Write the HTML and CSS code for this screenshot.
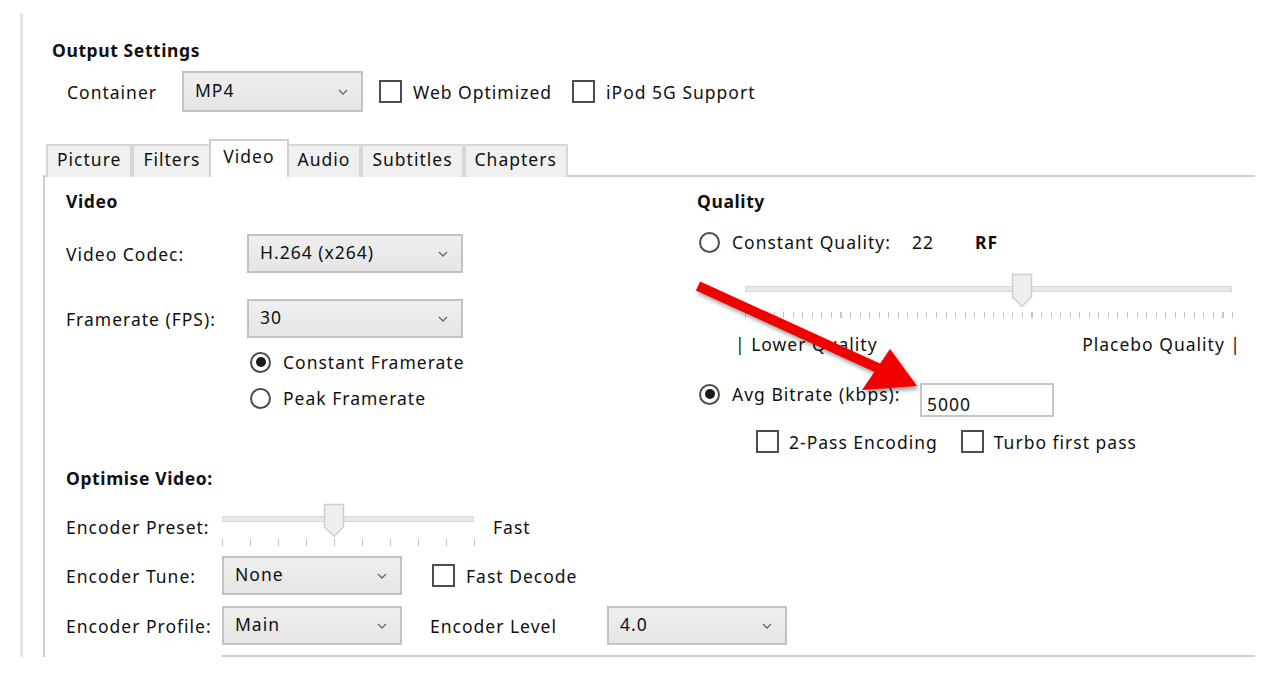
FILE: index.html
```html
<!DOCTYPE html>
<html lang="en">
<head>
  <meta charset="UTF-8">
  <title>Output Settings</title>
  <link rel="stylesheet" href="styles.css">
</head>
<body>
  <div class="window">
    <h2 class="section-title">Output Settings</h2>

    <div class="container-row">
      <span class="container-label">Container</span>
      <div class="select select-mp4">
        <span>MP4</span>
        <svg class="chevron" width="10" height="6" viewBox="0 0 10 6"><path d="M1 1 L5 5 L9 1" fill="none" stroke="#6b6b6b" stroke-width="1.4"/></svg>
      </div>
      <label class="check"><span class="box"></span>Web Optimized</label>
      <label class="check"><span class="box"></span>iPod 5G Support</label>
    </div>

    <div class="tabs">
      <div class="tab">Picture</div>
      <div class="tab">Filters</div>
      <div class="tab active">Video</div>
      <div class="tab">Audio</div>
      <div class="tab">Subtitles</div>
      <div class="tab">Chapters</div>
    </div>

    <div class="panel">
      <div class="columns">
        <!-- video -->
        <div class="col">
          <div class="group-title">Video</div>
          <div class="form-row codec-row">
            <span class="row-label">Video Codec:</span>
            <div class="select select-wide">
              <span>H.264 (x264)</span>
              <svg class="chevron" width="10" height="6" viewBox="0 0 10 6"><path d="M1 1 L5 5 L9 1" fill="none" stroke="#6b6b6b" stroke-width="1.4"/></svg>
            </div>
          </div>
          <div class="form-row fps-row">
            <span class="row-label">Framerate (FPS):</span>
            <div class="select select-wide">
              <span>30</span>
              <svg class="chevron" width="10" height="6" viewBox="0 0 10 6"><path d="M1 1 L5 5 L9 1" fill="none" stroke="#6b6b6b" stroke-width="1.4"/></svg>
            </div>
          </div>
          <label class="radio fps-radio first"><span class="dot checked"></span>Constant Framerate</label>
          <label class="radio fps-radio"><span class="dot"></span>Peak Framerate</label>
        </div>

        <!-- quality -->
        <div class="col">
          <div class="group-title">Quality</div>
          <div class="cq-row">
            <label class="radio"><span class="dot"></span>Constant Quality:</label>
            <span class="cq-value">22</span>
            <span class="cq-unit">RF</span>
          </div>
          <div class="slider quality-slider">
            <div class="track"></div>
            <div class="ticks"></div>
            <svg class="thumb" style="left: 56.9%" width="22" height="35" viewBox="0 0 22 35"><path d="M1.5 1.5 H20.5 V24 L11 33.5 L1.5 24 Z" fill="#efefef" stroke="#cfcfcf" stroke-width="1.5"/></svg>
          </div>
          <div class="scale-labels">
            <span>| Lower Quality</span>
            <span>Placebo Quality |</span>
          </div>
          <div class="bitrate-row">
            <label class="radio bitrate-label"><span class="dot checked"></span>Avg Bitrate (kbps):</label>
            <div class="text-input">5000</div>
          </div>
          <div class="pass-row">
            <label class="check"><span class="box"></span>2-Pass Encoding</label>
            <label class="check"><span class="box"></span>Turbo first pass</label>
          </div>
        </div>
      </div>

      <!-- optimise -->
      <div class="optimise">
        <div class="group-title">Optimise Video:</div>
        <div class="preset-row">
          <span class="opt-label">Encoder Preset:</span>
          <div class="slider preset-slider">
            <div class="track"></div>
            <div class="ticks"></div>
            <svg class="thumb" style="left: 44.4%" width="22" height="35" viewBox="0 0 22 35"><path d="M1.5 1.5 H20.5 V24 L11 33.5 L1.5 24 Z" fill="#efefef" stroke="#cfcfcf" stroke-width="1.5"/></svg>
          </div>
          <span class="preset-name">Fast</span>
        </div>
        <div class="form-row tune-row">
          <span class="opt-label">Encoder Tune:</span>
          <div class="select select-short">
            <span>None</span>
            <svg class="chevron" width="10" height="6" viewBox="0 0 10 6"><path d="M1 1 L5 5 L9 1" fill="none" stroke="#6b6b6b" stroke-width="1.4"/></svg>
          </div>
          <label class="check fast-decode"><span class="box"></span>Fast Decode</label>
        </div>
        <div class="form-row profile-row">
          <span class="opt-label">Encoder Profile:</span>
          <div class="select select-short">
            <span>Main</span>
            <svg class="chevron" width="10" height="6" viewBox="0 0 10 6"><path d="M1 1 L5 5 L9 1" fill="none" stroke="#6b6b6b" stroke-width="1.4"/></svg>
          </div>
          <span class="level-label">Encoder Level</span>
          <div class="select select-short">
            <span>4.0</span>
            <svg class="chevron" width="10" height="6" viewBox="0 0 10 6"><path d="M1 1 L5 5 L9 1" fill="none" stroke="#6b6b6b" stroke-width="1.4"/></svg>
          </div>
        </div>
        <div class="bottom-rule"></div>
      </div>
    </div>
  </div>

  <!-- annotation arrow -->
  <svg class="arrow" width="250" height="130" viewBox="0 0 250 130">
    <line x1="18" y1="16" x2="200" y2="99" stroke="#f20000" stroke-width="10"/>
    <polygon points="237,116 210,79 182,120" fill="#f20000"/>
  </svg>
</body>
</html>
```

FILE: styles.css
```css
body {
  margin: 0;
  background: #fff;
  font-family: "Noto Sans", "Open Sans", sans-serif;
  font-size: 17.5px;
  letter-spacing: 1px;
  line-height: 20px;
  color: #111;
  position: relative;
}

.window {
  margin: 13px 0 0 20px;
  padding: 27px 0 0 20px;
  border-left: 3px solid #e4e4e4;
}

.section-title,
.group-title {
  margin: 0;
  font-size: 17.5px;
  letter-spacing: 0.6px;
  line-height: 20px;
  font-weight: 700;
}

.section-title {
  padding-left: 9px;
}

/* container row */
.container-row {
  display: flex;
  align-items: center;
  margin-top: 11px;
  padding-left: 24px;
}

.container-label {
  width: 115px;
}

.select {
  display: flex;
  align-items: center;
  justify-content: space-between;
  box-sizing: border-box;
  height: 39px;
  padding: 0 13px 3px 11px;
  background: linear-gradient(#efefef, #e5e5e5);
  border: 2px solid #c2c2c2;
}

.select .chevron {
  margin-top: 3px;
}

.select-mp4 {
  width: 181px;
  height: 41px;
  margin-right: 16px;
}

.select-wide {
  width: 216px;
}

.select-short {
  width: 180px;
}

.check {
  display: flex;
  align-items: center;
  margin-right: 20px;
}

.box {
  width: 23px;
  height: 23px;
  box-sizing: border-box;
  border: 2px solid #4d4d4d;
  background: #fff;
  margin-right: 11px;
}

.radio {
  display: flex;
  align-items: center;
  height: 24px;
}

.dot {
  width: 21px;
  height: 21px;
  box-sizing: border-box;
  border: 2px solid #4d4d4d;
  border-radius: 50%;
  margin-right: 12px;
  display: flex;
  align-items: center;
  justify-content: center;
}

.dot.checked::after {
  content: "";
  width: 10px;
  height: 10px;
  border-radius: 50%;
  background: #1a1a1a;
}

/* tabs */
.tabs {
  display: flex;
  align-items: flex-end;
  margin-top: 27px;
  padding-left: 3px;
  margin-bottom: -2px;
  position: relative;
}

.tab {
  box-sizing: border-box;
  height: 33px;
  padding: 3px 9px 0;
  background: #f0f0f0;
  border: 2px solid #d6d6d6;
  border-bottom: none;
}

.tab.active {
  position: relative;
  height: 38px;
  margin: 0 -2px;
  padding: 5px 12px 0;
  background: #fff;
  border-color: #d0d0d0;
}

.panel {
  width: 1212px;
  box-sizing: border-box;
  padding: 14px 0 0 21px;
  border-top: 2px solid #cfcfcf;
  border-left: 2px solid #cfcfcf;
}

.columns {
  display: grid;
  grid-template-columns: 631px 1fr;
}

.form-row {
  display: flex;
  align-items: center;
}

.row-label {
  width: 181px;
}

.codec-row {
  margin-top: 23px;
}

.fps-row {
  margin-top: 26px;
}

.fps-radio {
  margin: 12px 0 0 184px;
}

/* quality column */
.cq-row {
  display: flex;
  align-items: center;
  margin-top: 19px;
  padding-left: 2px;
}

.cq-value {
  margin-left: 21px;
  width: 63px;
}

.cq-unit {
  font-weight: 700;
}

.slider {
  position: relative;
  height: 48px;
}

.slider .track {
  position: absolute;
  left: 0;
  right: 0;
  top: 16px;
  height: 6px;
  box-sizing: border-box;
  background: #e8e8e8;
  border: 1px solid #d8d8d8;
}

.slider .ticks {
  position: absolute;
  left: 0;
  right: -1px;
  top: 42px;
  height: 6px;
}

.slider .thumb {
  position: absolute;
  top: 3px;
  margin-left: -11px;
}

.quality-slider {
  width: 487px;
  margin: 16px 0 0 48px;
}

.quality-slider .ticks {
  background: repeating-linear-gradient(to right, #c4c4c4 0 1px, transparent 1px 9.55px);
}

.scale-labels {
  display: flex;
  justify-content: space-between;
  width: 506px;
  margin: 16px 0 0 38px;
}

.bitrate-row {
  display: flex;
  align-items: flex-start;
  margin-top: 28px;
  padding-left: 2px;
}

.bitrate-label {
  width: 221px;
}

.text-input {
  box-sizing: border-box;
  width: 134px;
  height: 34px;
  margin-top: 1px;
  padding: 9px 0 0 5px;
  border: 2px solid #c6c6c6;
}

.pass-row {
  display: flex;
  align-items: center;
  margin: 13px 0 0 59px;
}

.pass-row .box {
  margin-right: 10px;
}

.pass-row .check {
  margin-right: 23px;
}

/* optimise */
.optimise {
  margin-top: 15px;
}

.opt-label {
  width: 156px;
}

.preset-row {
  display: flex;
  align-items: flex-start;
  margin-top: 12px;
}

.preset-row .opt-label,
.preset-name {
  margin-top: 17px;
}

.preset-slider {
  width: 252px;
  height: 47px;
  margin-right: 19px;
}

.preset-slider .ticks {
  top: 39px;
  height: 7px;
  background: repeating-linear-gradient(to right, #c4c4c4 0 1px, transparent 1px 28px);
}

.tune-row {
  margin-top: 9px;
}

.fast-decode {
  margin-left: 30px;
}

.profile-row {
  margin-top: 11px;
}

.level-label {
  width: 177px;
  margin-left: 28px;
}

.bottom-rule {
  margin: 10px 0 0 156px;
  height: 2px;
  background: #cfcfcf;
}

/* red annotation arrow over the form */
.arrow {
  position: absolute;
  left: 680px;
  top: 270px;
  filter: drop-shadow(2px 3px 2px rgba(0, 0, 0, 0.4));
}
```
